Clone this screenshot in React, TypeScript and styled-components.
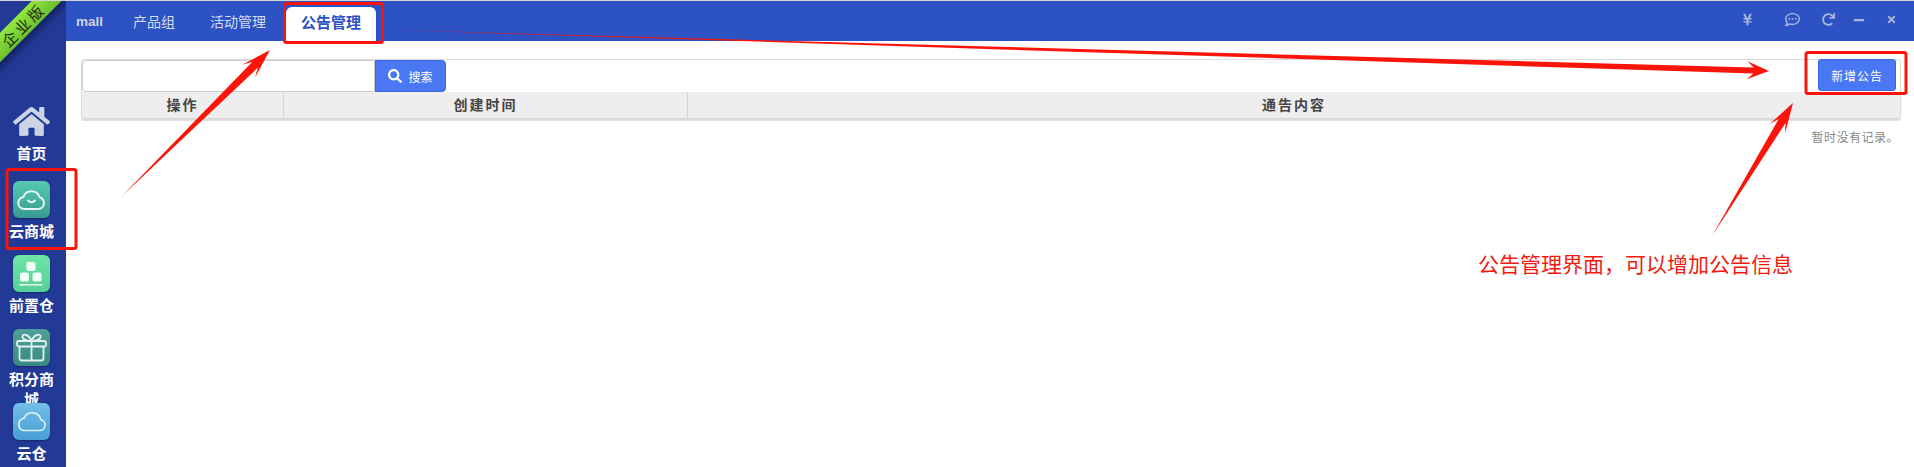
import React from 'react';
import styled, { createGlobalStyle } from 'styled-components';
import { FaYenSign, FaRegCommentDots, FaRedo, FaMinus, FaTimes, FaSearch, FaHome } from 'react-icons/fa';

const CJK = `"Liberation Sans", "Noto Sans CJK SC", sans-serif`;

const GlobalStyle = createGlobalStyle`
  html, body {
    margin: 0;
    padding: 0;
    background: #fff;
    font-family: ${CJK};
  }
`;

const Page = styled.div`
  position: relative;
  display: flex;
  width: 1914px;
  height: 467px;
  overflow: hidden;
  border-top: 1px solid #d4d4d4;
  box-sizing: border-box;
`;

const Sidebar = styled.aside`
  position: relative;
  flex: none;
  width: 66px;
  background: #223a96;
  padding: 102px 3px 0 0;
  box-sizing: border-box;
  overflow: hidden;
`;

const Ribbon = styled.div`
  position: absolute;
  left: -43px;
  top: 14px;
  width: 130px;
  height: 21px;
  padding-left: 3px;
  box-sizing: border-box;
  line-height: 23px;
  transform: rotate(-45deg);
  background: linear-gradient(#93e83f, #6cc02c);
  box-shadow: 0 5px 6px rgba(10, 20, 70, 0.6);
  color: #1c2a12;
  font-size: 15px;
  letter-spacing: 3px;
  text-align: center;
`;

const NavItem = styled.div<{ $first?: boolean }>`
  display: flex;
  flex-direction: column;
  align-items: center;
  height: ${(p) => (p.$first ? 78 : 74)}px;
`;

const HomeGlyph = styled.div`
  height: 37px;
  color: #cbd3e6;
  font-size: 37px;
  line-height: 37px;
  svg {
    display: block;
  }
`;

const IconTile = styled.div<{ $from: string; $to: string }>`
  position: relative;
  flex: none;
  width: 37px;
  height: 37px;
  border-radius: 6px;
  background: linear-gradient(${(p) => p.$from}, ${(p) => p.$to});
  box-shadow: 0 1px 2px rgba(10, 20, 60, 0.5);
  svg {
    display: block;
  }
`;

const NavLabel = styled.div`
  width: 50px;
  margin-top: 4px;
  color: #fff;
  font-size: 15px;
  font-weight: 700;
  line-height: 20px;
  text-align: center;
`;

const Main = styled.main`
  flex: 1;
  min-width: 0;
`;

const TopBar = styled.header`
  display: flex;
  align-items: flex-end;
  height: 40px;
  background: #2d52c4;
  padding-left: 10px;
`;

const Brand = styled.span`
  align-self: center;
  margin-right: 30px;
  color: #cfd5e8;
  font-size: 13.5px;
  font-weight: 700;
`;

const Tab = styled.div<{ $active?: boolean }>`
  height: 34px;
  line-height: 31px;
  padding: 0 ${(p) => (p.$active ? 15 : 0)}px;
  margin-right: ${(p) => (p.$active ? 0 : 35)}px;
  margin-left: ${(p) => (p.$active ? -15 : 0)}px;
  border-radius: 6px 6px 0 0;
  background: ${(p) => (p.$active ? '#fff' : 'transparent')};
  color: ${(p) => (p.$active ? '#2d52c4' : '#d5dcf2')};
  font-size: ${(p) => (p.$active ? 15 : 14)}px;
  font-weight: ${(p) => (p.$active ? 700 : 400)};
`;

const WindowTools = styled.div`
  display: flex;
  align-items: center;
  align-self: center;
  margin-left: auto;
  margin-top: -3px;
  padding-right: 17px;
  color: #a8b5de;
`;

const ToolIcon = styled.span<{ $gap: number }>`
  display: block;
  margin-left: ${(p) => p.$gap}px;
  svg {
    display: block;
  }
`;

const Content = styled.div`
  padding: 18px 13px 0 15px;
`;

const Panel = styled.section`
  border: 1px solid #dcdcdc;
  border-radius: 3px;
  box-shadow: 0 1px 1px #ddd;
`;

const Toolbar = styled.div`
  display: flex;
  height: 32px;
`;

const SearchInput = styled.input`
  width: 293px;
  height: 32px;
  margin: 0;
  padding: 0 6px;
  border: 1px solid #ccc;
  border-radius: 4px 0 0 4px;
  box-sizing: border-box;
  background: #fff;
  outline: none;
`;

const BlueButton = styled.button<{ $wide?: boolean }>`
  display: flex;
  align-items: center;
  justify-content: center;
  gap: 6px;
  width: ${(p) => (p.$wide ? 78 : 71)}px;
  height: 32px;
  padding: 0;
  border: 1px solid #3f68e0;
  border-radius: ${(p) => (p.$wide ? '3px' : '0 4px 4px 0')};
  background: #4a78f5;
  color: #fff;
  font-family: ${CJK};
  font-size: 12px;
  letter-spacing: ${(p) => (p.$wide ? 0.9 : 0)}px;
`;

const AddSlot = styled.div`
  margin-left: auto;
  margin-top: -1px;
  padding-right: 4px;
`;

const TableHead = styled.div`
  display: grid;
  grid-template-columns: 201px 404px 1fr;
  height: 27px;
  background: #eee;
  border-bottom: 1px solid #d8d8d8;
  box-sizing: border-box;
`;

const HeadCell = styled.div`
  border-left: 1px solid #d4d4d4;
  color: #444;
  font-size: 14px;
  font-weight: 700;
  letter-spacing: 2px;
  line-height: 27px;
  text-align: center;
  &:first-child {
    border-left: 0;
  }
`;

const EmptyNote = styled.div`
  margin-top: 10px;
  padding-right: 2px;
  color: #888;
  font-size: 12px;
  letter-spacing: 0.5px;
  line-height: 16px;
  text-align: right;
`;

const Markup = styled.svg`
  position: absolute;
  left: 0;
  top: -1px;
  width: 1914px;
  height: 467px;
  pointer-events: none;
`;

const Callout = styled.div`
  position: absolute;
  left: 1478px;
  top: 251px;
  color: #f21a0e;
  font-size: 21px;
  line-height: 26px;
  white-space: nowrap;
`;

const RED = '#fb1409';

// long thin wedge with a barbed head, from tail to tip
function arrowPoints(x1: number, y1: number, x2: number, y2: number, shaft: number, head: number, headLen: number) {
  const len = Math.hypot(x2 - x1, y2 - y1);
  const ux = (x2 - x1) / len;
  const uy = (y2 - y1) / len;
  const nx = -uy;
  const ny = ux;
  const bx = x2 - ux * headLen;
  const by = y2 - uy * headLen;
  const neck = 0.7;
  const nbx = x2 - ux * headLen * neck;
  const nby = y2 - uy * headLen * neck;
  return [
    [x1, y1],
    [nbx + nx * shaft, nby + ny * shaft],
    [bx + nx * head, by + ny * head],
    [x2, y2],
    [bx - nx * head, by - ny * head],
    [nbx - nx * shaft, nby - ny * shaft],
  ]
    .map((p) => p.map((v) => v.toFixed(1)).join(','))
    .join(' ');
}

const App: React.FC = () => {
  return (
    <>
      <GlobalStyle />
      <Page>
        <Sidebar>
          <Ribbon>企业版</Ribbon>
          <NavItem $first>
            <HomeGlyph>
              <FaHome />
            </HomeGlyph>
            <NavLabel>首页</NavLabel>
          </NavItem>
          <NavItem>
            <IconTile $from="#56c9b4" $to="#3a9a90">
              <svg viewBox="0 0 37 37" width="37" height="37" fill="none" stroke="#e6f7f3" strokeWidth="2" strokeLinecap="round">
                <path d="M12 28h13a6 6 0 0 0 1.500-11.800 8.400 8.400 0 0 0-16-.2A6 6 0 0 0 12 28z" />
                <path d="M15 19.500q3.500 3.500 7 0" />
              </svg>
            </IconTile>
            <NavLabel>云商城</NavLabel>
          </NavItem>
          <NavItem>
            <IconTile $from="#6fe6a6" $to="#55cf96">
              <svg viewBox="0 0 37 37" width="37" height="37" fill="#f2fff8">
                <rect x="13.500" y="7" width="9" height="9" rx="2" />
                <rect x="7" y="17.500" width="9" height="9" rx="2" />
                <rect x="19.500" y="17.500" width="9" height="9" rx="2" />
                <rect x="6" y="29" width="23.500" height="1.600" rx="0.800" />
              </svg>
            </IconTile>
            <NavLabel>前置仓</NavLabel>
          </NavItem>
          <NavItem>
            <IconTile $from="#4e9f98" $to="#3a8a82">
              <svg viewBox="0 0 37 37" width="37" height="37" fill="none" stroke="#dff2ee" strokeWidth="1.800" strokeLinejoin="round">
                <rect x="4" y="12" width="29" height="5.500" rx="2" />
                <path d="M6.500 17.500V29a2.500 2.500 0 0 0 2.500 2.500h19a2.500 2.500 0 0 0 2.500-2.500V17.500" />
                <path d="M18.500 12v19.500" />
                <path d="M18.500 12c-2-6-8-8-9-5s4 5 9 5zM18.500 12c2-6 8-8 9-5s-4 5-9 5z" />
              </svg>
            </IconTile>
            <NavLabel>积分商城</NavLabel>
          </NavItem>
          <NavItem>
            <IconTile $from="#72bfe6" $to="#479fd6">
              <svg viewBox="0 0 37 37" width="37" height="37" fill="none" stroke="#e4f4fb" strokeWidth="1.600">
                <path d="M10.500 27.500h16a5.500 5.500 0 0 0 1.500-10.800 9 9 0 0 0-17-1.500 6.300 6.300 0 0 0-.5 12.300z" />
              </svg>
            </IconTile>
            <NavLabel>云仓</NavLabel>
          </NavItem>
        </Sidebar>
        <Main>
          <TopBar>
            <Brand>mall</Brand>
            <Tab>产品组</Tab>
            <Tab>活动管理</Tab>
            <Tab $active>公告管理</Tab>
            <WindowTools>
              <ToolIcon $gap={0}>
                <FaYenSign size={13} />
              </ToolIcon>
              <ToolIcon $gap={31}>
                <FaRegCommentDots size={15} />
              </ToolIcon>
              <ToolIcon $gap={22}>
                <FaRedo size={13} />
              </ToolIcon>
              <ToolIcon $gap={18}>
                <FaMinus size={12} />
              </ToolIcon>
              <ToolIcon $gap={21}>
                <FaTimes size={11} />
              </ToolIcon>
            </WindowTools>
          </TopBar>
          <Content>
            <Panel>
              <Toolbar>
                <SearchInput />
                <BlueButton>
                  <FaSearch size={14} />
                  搜索
                </BlueButton>
                <AddSlot>
                  <BlueButton $wide>新增公告</BlueButton>
                </AddSlot>
              </Toolbar>
              <TableHead>
                <HeadCell>操作</HeadCell>
                <HeadCell>创建时间</HeadCell>
                <HeadCell>通告内容</HeadCell>
              </TableHead>
            </Panel>
            <EmptyNote>暂时没有记录。</EmptyNote>
          </Content>
        </Main>
        <Markup viewBox="0 0 1914 467">
          <g fill="none" stroke={RED} strokeWidth="3">
            <rect x="284.500" y="3.500" width="98" height="39" rx="2" />
            <rect x="7" y="169.500" width="69" height="79" rx="2" />
            <rect x="1806" y="52.500" width="100" height="41" rx="2" />
          </g>
          <g fill={RED}>
            <polygon points={arrowPoints(122, 196, 270, 50, 4, 9, 30)} />
            <polygon points={arrowPoints(393, 30, 1769, 71, 3, 9, 22)} />
            <polygon points={arrowPoints(1712, 236, 1793, 103, 4, 9, 30)} />
          </g>
        </Markup>
        <Callout>公告管理界面，可以增加公告信息</Callout>
      </Page>
    </>
  );
};

export default App;
